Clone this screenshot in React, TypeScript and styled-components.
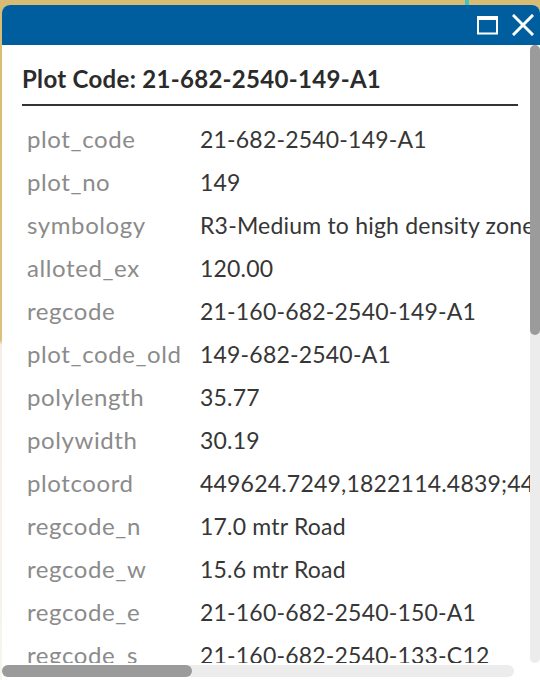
import React from "react";
import styled, { createGlobalStyle } from "styled-components";

const GlobalStyle = createGlobalStyle`
  html, body { margin: 0; padding: 0; }
  body {
    width: 540px;
    height: 680px;
    overflow: hidden;
    font-family: Lato, "Open Sans", "Noto Sans", sans-serif;
  }
`;

const Page = styled.div`
  width: 540px;
  height: 680px;
  box-sizing: border-box;
  padding: 5px 0 0 2px;
  background:
    linear-gradient(90deg, transparent 465px, #3fc4be 465px, #3fc4be 469px, transparent 469px) top / 100% 5px no-repeat,
    linear-gradient(180deg, #d9bc74 0px, #dcc07c 340px, #f4efe4 345px, #f7f4ee 680px);
  overflow: hidden;
`;

const Panel = styled.div`
  width: 538px;
  height: 675px;
  background: #ffffff;
  border-radius: 8px 8px 0 0;
  overflow: hidden;
  display: flex;
  flex-direction: column;
`;

const Header = styled.div`
  height: 40px;
  flex: none;
  background: #005e9f;
  display: flex;
  align-items: center;
  justify-content: flex-end;
  gap: 14px;
  padding-right: 6px;
`;

const IconButton = styled.button`
  border: 0;
  background: transparent;
  padding: 0;
  width: 22px;
  height: 22px;
  display: flex;
  align-items: center;
  justify-content: center;
  cursor: pointer;
`;

const Body = styled.div`
  flex: none;
  display: grid;
  grid-template-columns: 528px 10px;
  grid-template-rows: 618px 12px;
  row-gap: 2px;
`;

const Viewport = styled.div`
  overflow: hidden;
  box-sizing: border-box;
  padding: 20px 12px 0 20px;
  min-width: 0;
`;

const VTrack = styled.div`
  background: #ececec;
  border-radius: 5px;
  display: flex;
  flex-direction: column;
`;

const VThumb = styled.div<{ $size: number }>`
  height: ${(p) => p.$size}px;
  background: #9b9b9b;
  border-radius: 5px;
`;

const HTrack = styled.div`
  background: #ececec;
  border-radius: 6px;
  margin-right: 16px;
  display: flex;
`;

const HThumb = styled.div<{ $size: number }>`
  width: ${(p) => p.$size}px;
  background: #9b9b9b;
  border-radius: 6px;
`;

const Title = styled.h2`
  margin: 0;
  padding: 0 0 11px 0;
  border-bottom: 2px solid #333333;
  font-family: Lato, "Open Sans", sans-serif;
  font-weight: 700;
  font-size: 24px;
  letter-spacing: 0.3px;
  line-height: 28px;
  color: #2b2b2b;
  white-space: nowrap;
`;

const Table = styled.div`
  margin-top: 11px;
  display: grid;
  grid-template-columns: 178px max-content;
  width: max-content;
`;

const Label = styled.div`
  height: 43px;
  display: flex;
  align-items: center;
  padding-left: 5px;
  font-size: 24px;
  letter-spacing: 0.6px;
  color: #8b8b8b;
  white-space: nowrap;
`;

const Value = styled.div`
  height: 43px;
  display: flex;
  align-items: center;
  font-size: 23px;
  letter-spacing: 0.2px;
  color: #363636;
  white-space: nowrap;
`;

const rows: [string, string][] = [
  ["plot_code", "21-682-2540-149-A1"],
  ["plot_no", "149"],
  ["symbology", "R3-Medium to high density zone (Residential)"],
  ["alloted_ex", "120.00"],
  ["regcode", "21-160-682-2540-149-A1"],
  ["plot_code_old", "149-682-2540-A1"],
  ["polylength", "35.77"],
  ["polywidth", "30.19"],
  [
    "plotcoord",
    "449624.7249,1822114.4839;449651.0123,1822098.2211;449636.4412,1822071.9035;449610.2231,1822088.1156",
  ],
  ["regcode_n", "17.0 mtr Road"],
  ["regcode_w", "15.6 mtr Road"],
  ["regcode_e", "21-160-682-2540-150-A1"],
  ["regcode_s", "21-160-682-2540-133-C12"],
  ["landuse", "Residential"],
  ["zone_no", "682"],
  ["sector_no", "2540"],
  ["area_sqm", "1079.90"],
  ["status", "Allotted"],
];

export default function App() {
  return (
    <>
      <GlobalStyle />
      <Page>
        <Panel>
          <Header>
            <IconButton aria-label="Maximize">
              <svg width="21" height="19" viewBox="0 0 21 19">
                <rect x="1" y="1.5" width="19" height="16" fill="none" stroke="#ffffff" strokeWidth="2" />
                <rect x="0" y="0" width="21" height="4" fill="#ffffff" />
              </svg>
            </IconButton>
            <IconButton aria-label="Close">
              <svg width="22" height="22" viewBox="0 0 22 22">
                <path d="M2 2 L20 20 M20 2 L2 20" stroke="#ffffff" strokeWidth="3" strokeLinecap="square" />
              </svg>
            </IconButton>
          </Header>
          <Body>
            <Viewport>
              <Title>Plot Code: 21-682-2540-149-A1</Title>
              <Table>
                {rows.map(([k, v]) => (
                  <React.Fragment key={k}>
                    <Label>{k}</Label>
                    <Value>{v}</Value>
                  </React.Fragment>
                ))}
              </Table>
            </Viewport>
            <VTrack>
              <VThumb $size={290} />
            </VTrack>
            <HTrack>
              <HThumb $size={190} />
            </HTrack>
          </Body>
        </Panel>
      </Page>
    </>
  );
}
